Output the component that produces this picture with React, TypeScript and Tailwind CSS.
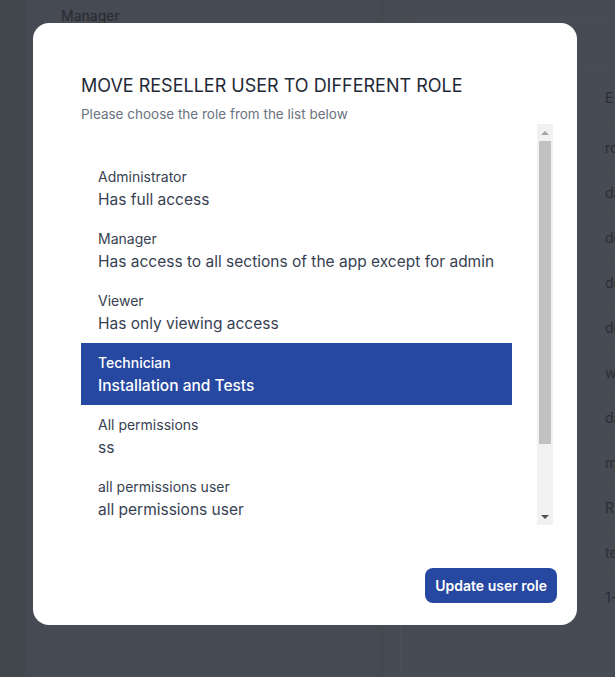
import React from 'react';

interface Role {
    name: string;
    description: string;
}

const roles: Role[] = [
    { name: 'Administrator', description: 'Has full access' },
    { name: 'Manager', description: 'Has access to all sections of the app except for admin' },
    { name: 'Viewer', description: 'Has only viewing access' },
    { name: 'Technician', description: 'Installation and Tests' },
    { name: 'All permissions', description: 'ss' },
    { name: 'all permissions user', description: 'all permissions user' },
];

const tableRows = ['ro', 'da', 'de', 'de', 'de', 'w', 'da', 'm', 'R', 'te', '1-'];

function BackgroundPage() {
    return (
        <div className="flex h-full w-full">
            <div className="w-[25px] shrink-0 bg-[#42464d]" />
            <div className="flex w-[358px] shrink-0 flex-col border-r border-[#41454c] bg-[#464a52]">
                <div className="flex items-start justify-between pl-[36px] pr-[48px] pt-[5px]">
                    <span className="text-[14px] text-[#262a31]">Manager</span>
                    <span className="mt-[14px] text-[12px] text-[#3a3e45]">0</span>
                </div>
            </div>
            <div className="flex-1 bg-[#474b53] pl-[17px] pt-[20px]">
                <div className="h-full rounded-tl-xl border-l border-t border-[#4b4f57]">
                    <div className="h-[50px] border-b border-[#4b4f57]" />
                    <div className="flex flex-col pl-[204px] text-[14px] text-[#2a2e35]">
                        <div className="flex h-[53px] items-center">E</div>
                        {tableRows.map((t, i) => (
                            <div key={i} className="flex h-[45px] items-center border-t border-dashed border-[#42464d]">
                                {t}
                            </div>
                        ))}
                    </div>
                </div>
            </div>
        </div>
    );
}

function FakeScrollbar() {
    return (
        <div className="flex w-[16px] shrink-0 flex-col items-center bg-[#f1f1f1]">
            <div className="flex h-[17px] w-full items-center justify-center">
                <div className="h-0 w-0 border-x-[4px] border-b-[4px] border-x-transparent border-b-[#a3a3a3]" />
            </div>
            <div className="h-[303px] w-[12px] bg-[#c1c1c1]" />
            <div className="flex-1" />
            <div className="flex h-[17px] w-full items-center justify-center">
                <div className="h-0 w-0 border-x-[4px] border-t-[4px] border-x-transparent border-t-[#505050]" />
            </div>
        </div>
    );
}

export default function App() {
    const selected = 3;

    return (
        <div className="relative h-[677px] w-[615px] overflow-hidden font-['Inter',sans-serif]">
            <BackgroundPage />

            <div className="absolute inset-0 flex pl-[33px] pt-[23px]">
                <div className="flex h-[602px] w-[544px] flex-col rounded-2xl bg-white pl-[48px] pr-[20px] pt-[51px]">
                    <h2 className="text-[18px] font-normal leading-[24px] text-[#1f2937]">
                        MOVE RESELLER USER TO DIFFERENT ROLE
                    </h2>
                    <p className="mt-[7px] text-[13.5px] leading-[18px] text-[#6b7280]">
                        Please choose the role from the list below
                    </p>

                    <div className="mt-[1px] mr-[4px] flex h-[401px] overflow-hidden">
                        <ul className="flex-1 pt-[33px] pr-[25px]">
                            {roles.map((role, i) => (
                                <li
                                    key={role.name}
                                    className={
                                        i === selected
                                            ? 'flex h-[62px] flex-col justify-center bg-[#2748a0] pl-[17px] pt-[2px] text-white'
                                            : 'flex h-[62px] flex-col justify-center pl-[17px] pt-[2px] text-[#374151]'
                                    }
                                >
                                    <span className={i === selected ? 'text-[14px] font-medium leading-[20px]' : 'text-[14px] leading-[20px]'}>
                                        {role.name}
                                    </span>
                                    <span className={i === selected ? 'text-[15.5px] font-medium leading-[25px]' : 'text-[15.5px] leading-[25px]'}>
                                        {role.description}
                                    </span>
                                </li>
                            ))}
                        </ul>
                        <FakeScrollbar />
                    </div>

                    <div className="mt-[43px] flex justify-end">
                        <button className="h-[35px] rounded-lg bg-[#2748a0] px-[10px] text-[14px] font-semibold text-white">
                            Update user role
                        </button>
                    </div>
                </div>
            </div>
        </div>
    );
}
